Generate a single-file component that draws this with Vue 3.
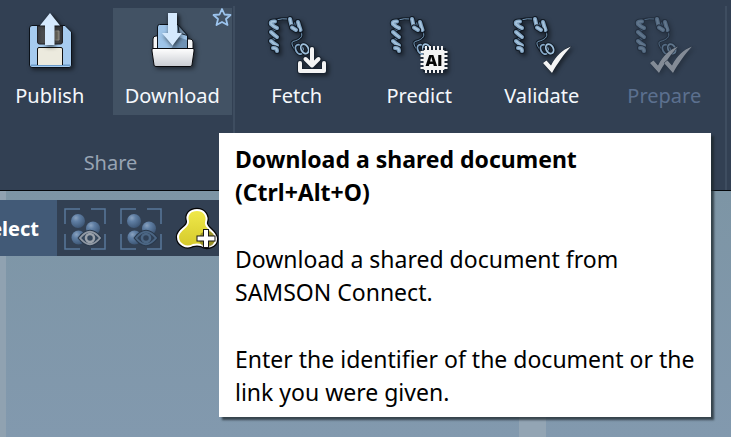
<script setup>
const proteinTools = [
  { label: 'Fetch', kind: 'fetch' },
  { label: 'Predict', kind: 'predict' },
  { label: 'Validate', kind: 'validate' },
  { label: 'Prepare', kind: 'prepare', disabled: true },
]
const tick = 'M33 51L36.500 48.500L41 53.500C46 44 52 38 61 34.500C54 42 47 52 42 61Z'
const pins = [40, 44, 48, 52, 56]
// helix turns: the far side first, then the near side over it
const farTurns = 'M12 16L6 20M12 25L6 29M12 33L8 36M27 15L32 10'
const nearTurns = ['M10 9.500Q5 9 6 12Q9 15 12 16', 'M6 20Q8 22 12 25', 'M6 29Q8 31 12 33.500', 'M8 36Q12 36 12 39', 'M25 7Q26 12 27 15', 'M33 10Q34 14 35.500 18', 'M27 15.500L31 18']
</script>

<template>
  <div class="app">
    <svg class="defs" aria-hidden="true">
      <defs>
        <linearGradient id="paperFill" x1="0" y1="0" x2="0" y2="1">
          <stop offset="0" stop-color="#ffffff" />
          <stop offset="1" stop-color="#c9ccd2" />
        </linearGradient>
        <linearGradient id="shutterFill">
          <stop offset="0" stop-color="#3a3b3e" />
          <stop offset="0.5" stop-color="#6b6c6e" />
          <stop offset="1" stop-color="#303134" />
        </linearGradient>
        <radialGradient id="atomFill" cx="0.35" cy="0.28" r="0.75">
          <stop offset="0" stop-color="#8aa2bf" />
          <stop offset="0.35" stop-color="#607fa4" />
          <stop offset="1" stop-color="#3d5675" />
        </radialGradient>
        <linearGradient id="yellowFill" x1="0" y1="0" x2="0" y2="1">
          <stop offset="0" stop-color="#f0e94a" />
          <stop offset="1" stop-color="#d5c92b" />
        </linearGradient>
        <g id="protein" fill="none" stroke-linecap="round" stroke-linejoin="round">
          <path d="M11 8Q17 6 24 7M36 20C39 25 34 28 28 29.500C25 31 29 38 34 41" stroke="#111a25" stroke-width="3" />
          <path d="M11 8Q17 6 24 7M36 20C39 25 34 28 28 29.500C25 31 29 38 34 41" stroke="#7396b5" stroke-width="1" />
          <path :d="farTurns" stroke="#111a25" stroke-width="5" />
          <path :d="farTurns" stroke="#54728f" stroke-width="3" />
          <g v-for="turn in nearTurns" :key="turn">
            <path :d="turn" stroke="#111a25" stroke-width="6" />
            <path :d="turn" stroke="#83a5c4" stroke-width="4" />
            <path :d="turn" stroke="#a9c6de" stroke-width="1.500" />
          </g>
          <g transform="rotate(-28 37 36)">
            <ellipse cx="34" cy="36" rx="3.500" ry="5" stroke="#111a25" stroke-width="3.500" />
            <ellipse cx="34" cy="36" rx="3.500" ry="5" stroke="#86a9c9" stroke-width="1.800" />
            <ellipse cx="39" cy="38" rx="3.500" ry="5" stroke="#111a25" stroke-width="3.500" />
            <ellipse cx="39" cy="38" rx="3.500" ry="5" stroke="#9fc0dc" stroke-width="1.800" />
          </g>
        </g>
      </defs>
    </svg>

    <header class="ribbon">
      <section class="group share">
        <div class="tools">
          <button class="tool" type="button">
            <svg class="icon" viewBox="0 0 64 64" aria-hidden="true">
              <path d="M14 13.500H47L53.500 20V53Q53.500 55.500 51 55.500H14Q11.500 55.500 11.500 53V16Q11.500 13.500 14 13.500Z" fill="#a6cbef" stroke="#0b1119" />
              <path d="M13 52.500H52V54H13Z" fill="#6b9bc9" />
              <path d="M19.500 14H44.500V30Q44.500 32 42.500 32H21.500Q19.500 32 19.500 30Z" fill="url(#shutterFill)" stroke="#202126" />
              <path d="M37 19H41V28H37Z" fill="#777267" stroke="#97928a" />
              <path d="M19.500 53V37Q19.500 35.500 21 35.500H43Q44.500 35.500 44.500 37V53" fill="#eceade" stroke="#111" />
              <path class="arrow" d="M32 1L42 13.500H36.500V33H27V13.500H22Z" />
            </svg>
            <span>Publish</span>
          </button>
          <button class="tool hovered" type="button" aria-describedby="download-tip">
            <svg class="icon" viewBox="0 0 64 64" aria-hidden="true">
              <path d="M13 40V27Q13 24 16 24H21V30H46V27H50Q53 27 53 30V40Z" fill="#f4f5f6" stroke="#101318" />
              <path d="M19.500 12.500H38L47.500 23V38H17.500V15Q17.500 12.500 19.500 12.500Z" fill="#9fc5e9" stroke="#0b1119" />
              <path d="M38 13L47.500 23.500L39 21Z" fill="#738ca5" stroke="#16202b" />
              <path d="M38 25L47 28V37H31Z" fill="#527292" opacity="0.6" />
              <path d="M13 36.500H53Q54.500 36.500 54 39L52 53Q52 54.500 50 54.500H16Q14 54.500 14 53L12 39Q11.500 36.500 13 36.500Z" fill="url(#paperFill)" stroke="#08090c" />
              <path class="arrow" d="M28 1H37V21H42L32.500 33.500L22 21H28Z" />
            </svg>
            <span>Download</span>
            <svg class="star" viewBox="0 0 20 20" aria-hidden="true">
              <path d="M10 2L12.500 7.500L18.500 8L14 12L15.500 18L10 15L4.500 18L6 12L1.500 8L7.500 7.500Z" fill="none" stroke="#9cc4ee" stroke-width="1.800" stroke-linejoin="round" />
            </svg>
          </button>
        </div>
        <h2 class="caption">Share</h2>
      </section>

      <section class="group proteins">
        <div class="tools">
          <button v-for="tool in proteinTools" :key="tool.kind" class="tool" type="button" :disabled="tool.disabled">
            <svg class="icon" viewBox="0 0 64 64" aria-hidden="true">
              <use href="#protein" />
              <g v-if="tool.kind === 'fetch'" fill="none" stroke-linecap="round" stroke-linejoin="round">
                <path d="M47 37V52M40.500 47L47 53.500L53.500 47M35 51V59H59V51" stroke="#182331" stroke-width="6" />
                <path d="M47 37V52M40.500 47L47 53.500L53.500 47M35 51V59H59V51" stroke="#f4f4f4" stroke-width="4" />
              </g>
              <g v-else-if="tool.kind === 'predict'">
                <rect x="36" y="36" width="23" height="24" fill="#182331" />
                <g stroke="#f4f4f4" stroke-width="2">
                  <path v-for="p in pins" :key="p" :d="`M${p - 1} 34V61M33.500 ${p}H60.500`" />
                </g>
                <rect x="36.500" y="38" width="21" height="20" rx="1" fill="#f4f4f4" />
                <text x="47" y="54" text-anchor="middle" class="chip">AI</text>
              </g>
              <path v-else-if="tool.kind === 'validate'" :d="tick" class="tick" />
              <template v-else>
                <path :d="tick" class="tick" transform="translate(-15)" />
                <path :d="tick" class="tick" transform="translate(-1)" />
              </template>
            </svg>
            <span>{{ tool.label }}</span>
          </button>
        </div>
      </section>
    </header>

    <main class="workspace">
      <div class="selectbar">
        <strong class="mode">Select</strong>
        <button v-for="n in 2" :key="n" class="pick" type="button" :aria-label="n === 1 ? 'Show' : 'Hide'">
          <svg viewBox="0 0 42 42" aria-hidden="true">
            <path d="M16 1H1V16M27 1H41V16M16 41H1V26M27 41H41V26" fill="none" stroke="#58779a" stroke-width="1.500" />
            <circle cx="29" cy="20.500" r="7" fill="url(#atomFill)" />
            <circle cx="14" cy="13" r="7" fill="url(#atomFill)" />
            <circle cx="14.500" cy="29.500" r="7" fill="url(#atomFill)" />
            <path d="M16 30Q26 17.500 36 30Q26 42.500 16 30Z" fill="none" stroke="#2a394c" stroke-width="4" />
            <path d="M16 30Q26 17.500 36 30Q26 42.500 16 30Z" :fill="n === 1 ? '#36485d' : '#304157'" :stroke="n === 1 ? '#9199a4' : '#4b6684'" stroke-width="2" />
            <circle cx="26" cy="30" r="4" fill="none" :stroke="n === 1 ? '#9ba2ab' : '#4b6684'" stroke-width="2.500" />
          </svg>
        </button>
        <button class="pick" type="button" aria-label="Add to selection">
          <svg viewBox="0 0 42 42" aria-hidden="true">
            <path d="M21 2C28 2 32 8 30 14C28 20 40 23 40 31C40 38 31 41 25 37Q21 36 17 37C10 41 2 36 2 29C2 21 13 20 12 13C10 7 14 2 21 2Z" stroke="#050505" stroke-width="4.500" />
            <path d="M21 2C28 2 32 8 30 14C28 20 40 23 40 31C40 38 31 41 25 37Q21 36 17 37C10 41 2 36 2 29C2 21 13 20 12 13C10 7 14 2 21 2Z" fill="url(#yellowFill)" stroke="#fff" stroke-width="2" />
            <circle cx="31" cy="31" r="8" fill="#70691f" opacity="0.6" />
            <path d="M30 21V40M20.500 30.500H39.500" stroke="#171717" stroke-width="6" />
            <path d="M30 22V39M21.500 30.500H38.500" stroke="#fff" stroke-width="4" />
          </svg>
        </button>
      </div>
    </main>

    <div id="download-tip" class="tooltip" role="tooltip">
      <p class="title">Download a shared document (Ctrl+Alt+O)</p>
      <p>Download a shared document from SAMSON Connect.</p>
      <p>Enter the identifier of the document or the link you were given.</p>
    </div>
  </div>
</template>

<style>
body {
  background: #8198ac;
}
</style>

<style scoped>
.app {
  position: relative;
  display: flex;
  flex-direction: column;
  min-height: 100vh;
  overflow: hidden;
  font-family: "Noto Sans", "Open Sans", sans-serif;
}
.defs {
  position: absolute;
  width: 0;
  height: 0;
}
.ribbon {
  display: flex;
  padding-top: 6px;
  margin-left: -12px;
  padding-right: 4px;
  background: #324053;
  border-bottom: 1px solid #05080c;
}
.group {
  box-sizing: border-box;
  min-height: 184px;
  padding-top: 2px;
  border-right: 2px solid #3e4d60;
}
.share {
  flex: 0 0 247px;
}
.proteins {
  flex: 1;
}
.tools {
  display: flex;
}
.tool {
  position: relative;
  flex: 1;
  display: flex;
  flex-direction: column;
  align-items: center;
  margin: 0 1px 0 2px;
  padding: 4px 0 0;
  border: 0;
  background: none;
  color: #f5f8fc;
  font: 20px/39px "Noto Sans", "Open Sans", sans-serif;
}
.hovered {
  background: #425264;
}
.tool:disabled {
  color: #5c708f;
}
.tool:disabled .icon {
  opacity: 0.42;
}
.icon {
  width: 64px;
  height: 64px;
  filter: drop-shadow(2px 2px 2px rgba(0, 0, 0, 0.5));
}
.arrow {
  fill: #d5e9fd;
  filter: drop-shadow(1px 2px 2px rgba(0, 0, 0, 0.6));
}
.star {
  position: absolute;
  top: -1px;
  right: 0;
  width: 20px;
  height: 20px;
}
.chip {
  font: 800 16px "Open Sans", sans-serif;
  fill: #050505;
}
.tick {
  fill: #f4f4f4;
  stroke: #182331;
  stroke-width: 1px;
  paint-order: stroke;
}
.caption {
  margin: 33px 0 0;
  color: #98a4b3;
  font-size: 20px;
  font-weight: 400;
  line-height: 30px;
  text-align: center;
}
.workspace {
  flex: 1;
  padding-top: 9px;
  background:
    linear-gradient(90deg, #90a2b1 6px, transparent 6px),
    linear-gradient(90deg, transparent 71%, #93a5b4 71%, #93a5b4 calc(71% + 27px), transparent calc(71% + 27px)) bottom / 100% 24px no-repeat,
    linear-gradient(#7d95a5, #8299ae);
}
.selectbar {
  display: flex;
  width: fit-content;
  background: #324053;
}
.mode {
  display: flex;
  align-items: center;
  justify-content: flex-end;
  width: 39px;
  padding-right: 18px;
  background: #425a77;
  color: #fff;
  font-size: 20px;
}
.pick {
  padding: 8px 7px 6px;
  border: 0;
  background: none;
}
.pick svg {
  display: block;
  width: 42px;
  height: 42px;
  overflow: visible;
}
.tooltip {
  position: absolute;
  top: 133px;
  left: 219px;
  right: 20px;
  padding: 10px 16px 8px;
  background: #fff;
  box-shadow: 3px 3px 2px rgba(30, 40, 45, 0.75);
  color: #000;
  font-size: 23px;
  line-height: 33px;
}
.tooltip p {
  margin: 0 0 34px;
}
.tooltip p:last-child {
  margin-bottom: 0;
}
.tooltip .title {
  font-weight: 700;
}
</style>
